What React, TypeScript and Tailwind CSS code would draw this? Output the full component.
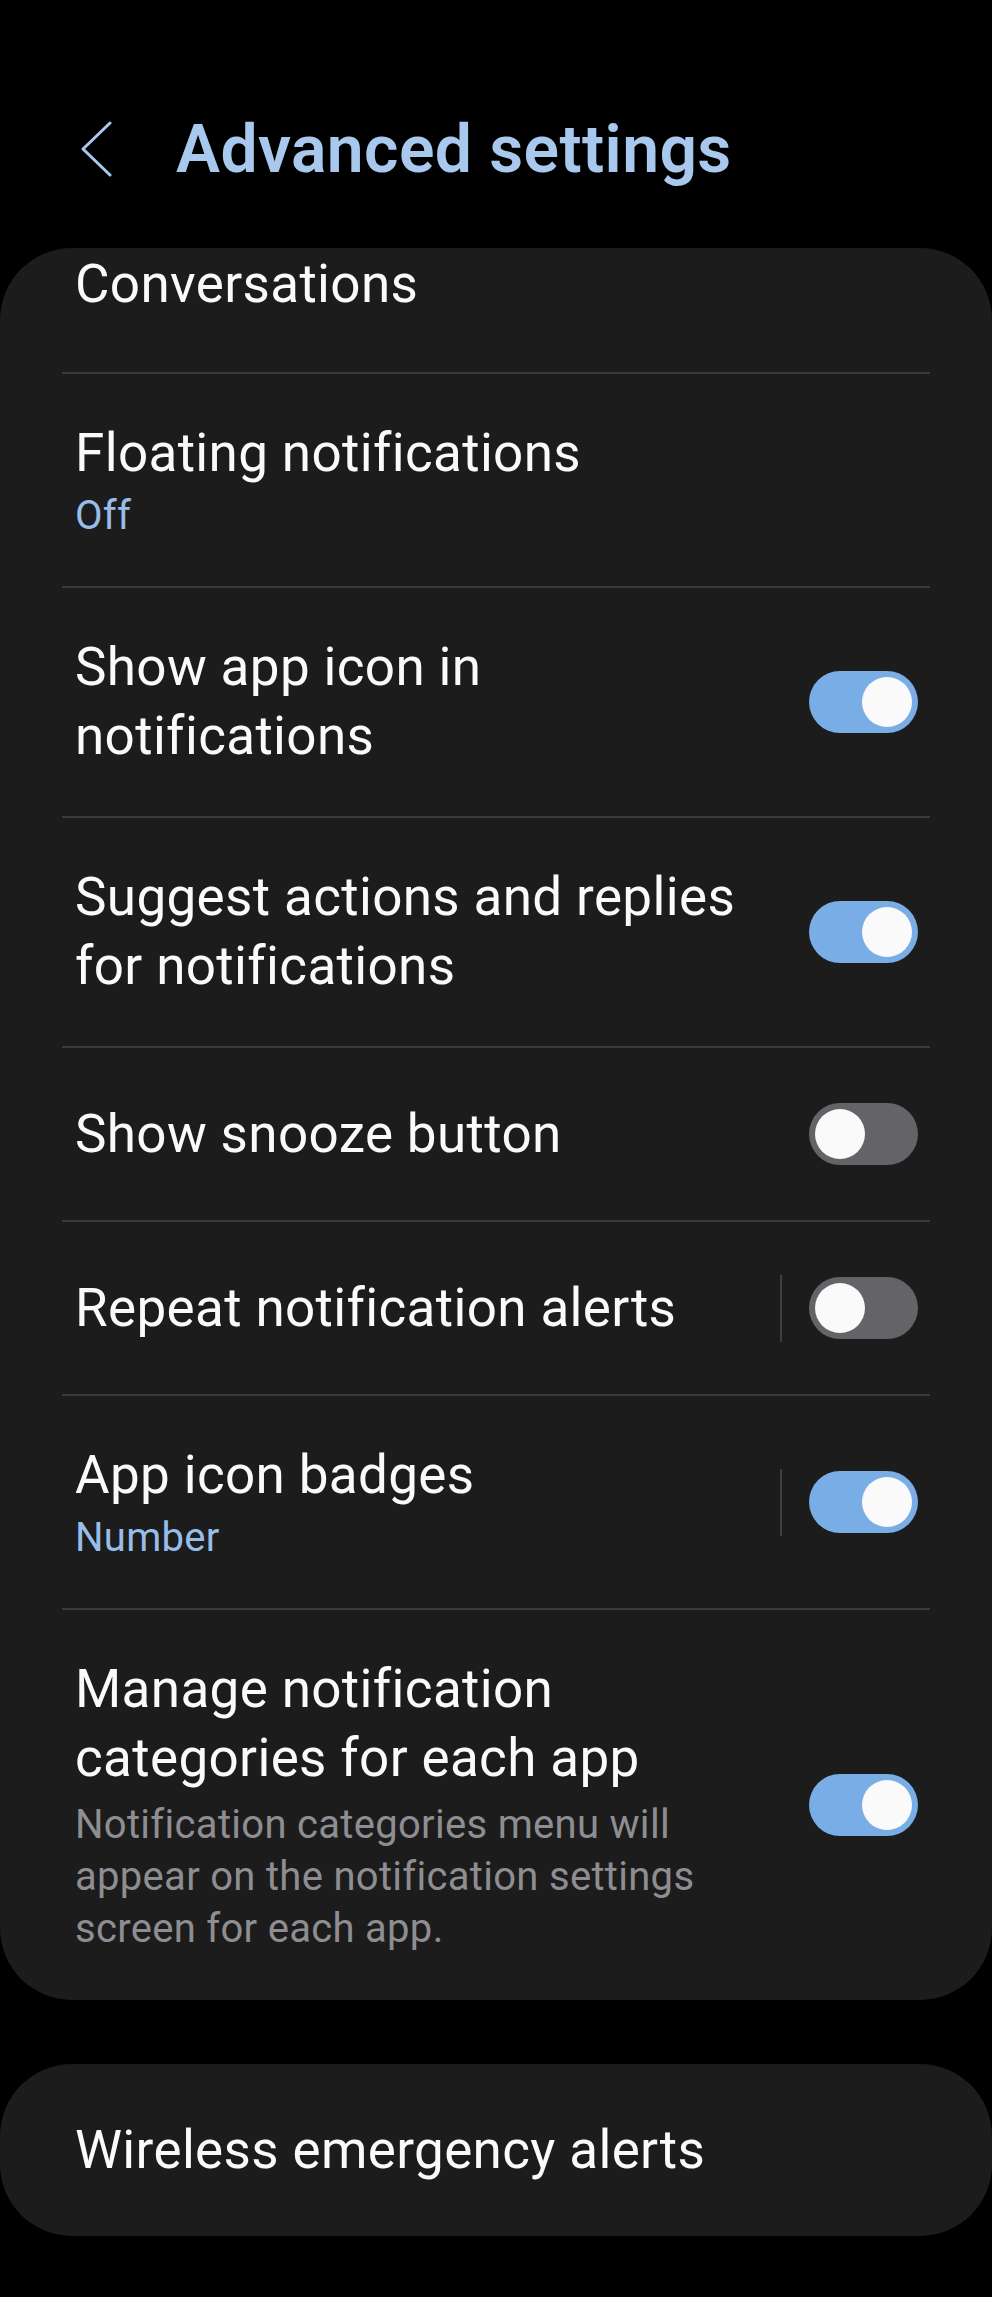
import { Fragment } from "react";

type Row = {
  title: string[];
  sub?: string;
  desc?: string[];
  toggle?: boolean;
  split?: boolean;
};

const ROWS: Row[] = [
  { title: ["Floating notifications"], sub: "Off" },
  { title: ["Show app icon in", "notifications"], toggle: true },
  { title: ["Suggest actions and replies", "for notifications"], toggle: true },
  { title: ["Show snooze button"], toggle: false },
  { title: ["Repeat notification alerts"], toggle: false, split: true },
  { title: ["App icon badges"], sub: "Number", toggle: true, split: true },
  {
    title: ["Manage notification", "categories for each app"],
    desc: [
      "Notification categories menu will",
      "appear on the notification settings",
      "screen for each app."
    ],
    toggle: true
  }
];

function Toggle({ on }: { on: boolean }) {
  return (
    <div
      className={
        on
          ? "relative h-[62px] w-[109px] shrink-0 rounded-full bg-[#79ade6]"
          : "relative h-[62px] w-[109px] shrink-0 rounded-full bg-[#646468]"
      }
    >
      <div
        className={
          on
            ? "absolute right-[6px] top-[6px] size-[50px] rounded-full bg-[#fafafa]"
            : "absolute left-[6px] top-[6px] size-[50px] rounded-full bg-[#fafafa]"
        }
      />
    </div>
  );
}

function SettingRow({ row }: { row: Row }) {
  return (
    <div className="flex min-h-[172px] items-center justify-between py-[45px] pl-[13px] pr-[12px]">
      <div className="flex flex-col">
        <p className="text-[53px] leading-[69px] tracking-[0.35px] text-[#fafafa]">
          {row.title.map((line, i) => (
            <Fragment key={i}>
              {i > 0 && <br />}
              {line}
            </Fragment>
          ))}
        </p>
        {row.sub && (
          <p className="mt-[3px] text-[40px] leading-[50px] tracking-[0.3px] text-[#98bde9]">
            {row.sub}
          </p>
        )}
        {row.desc && (
          <p className="mt-[6px] text-[40px] leading-[52px] tracking-[0.3px] text-[#8e8e92]">
            {row.desc.map((line, i) => (
              <Fragment key={i}>
                {i > 0 && <br />}
                {line}
              </Fragment>
            ))}
          </p>
        )}
      </div>
      {row.toggle !== undefined && (
        <div className="flex items-center">
          {row.split && <div className="mr-[27px] h-[67px] w-[2px] bg-[#3e3e3e]" />}
          <Toggle on={row.toggle} />
        </div>
      )}
    </div>
  );
}

export default function App() {
  return (
    <div className="min-h-[2297px] w-[992px] bg-black font-['Roboto','Liberation_Sans',sans-serif] antialiased">
      {/* header */}
      <div className="flex h-[248px] items-start pl-[81px] pt-[117px]">
        <div className="flex h-[65px] items-center gap-[64px]">
          <svg width="31" height="56" viewBox="0 0 31 56" fill="none" className="mt-[-2px]">
            <polyline
              points="29,2 2,28 29,54"
              stroke="#a8c8ee"
              strokeWidth="3"
              strokeLinecap="round"
              strokeLinejoin="round"
            />
          </svg>
          <h1 className="text-[66px] font-semibold leading-[65px] tracking-[0.4px] text-[#a8c8ee]">
            Advanced settings
          </h1>
        </div>
      </div>

      {/* main card */}
      <div className="rounded-[72px] bg-[#1c1c1c] px-[62px]">
        <div className="h-[124px] pl-[13px] pt-[2px]">
          <p className="text-[53px] leading-[69px] tracking-[0.35px] text-[#fafafa]">Conversations</p>
        </div>
        {ROWS.map((row, i) => (
          <div key={i} className="border-t-2 border-[#3a3a3a]">
            <SettingRow row={row} />
          </div>
        ))}
      </div>

      {/* second card */}
      <div className="mt-[64px] flex h-[172px] items-center rounded-[72px] bg-[#1c1c1c] px-[75px]">
        <p className="text-[53px] leading-[69px] tracking-[0.35px] text-[#fafafa]">Wireless emergency alerts</p>
      </div>
    </div>
  );
}
